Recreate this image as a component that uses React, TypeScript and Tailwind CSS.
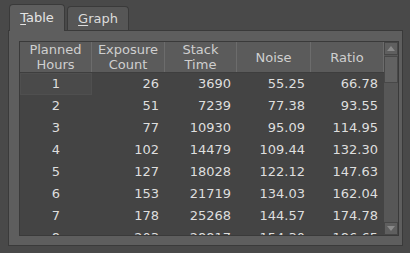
import React from "react";

const rows = [
  ["1", "26", "3690", "55.25", "66.78"],
  ["2", "51", "7239", "77.38", "93.55"],
  ["3", "77", "10930", "95.09", "114.95"],
  ["4", "102", "14479", "109.44", "132.30"],
  ["5", "127", "18028", "122.12", "147.63"],
  ["6", "153", "21719", "134.03", "162.04"],
  ["7", "178", "25268", "144.57", "174.78"],
  ["8", "203", "28817", "154.30", "186.65"],
];

const headers = [
  ["Planned", "Hours"],
  ["Exposure", "Count"],
  ["Stack", "Time"],
  ["Noise"],
  ["Ratio"],
];

const cols = "grid grid-cols-[72px_73px_72px_74px_73px]";

export default function App() {
  return (
    <div
      className="w-[410px] h-[253px] bg-[#494949] pt-[4px] pl-[8px] pr-[7px] overflow-hidden text-[13px] text-[#dedede]"
      style={{ fontFamily: '"DejaVu Sans", sans-serif' }}
    >
      {/* Tabs */}
      <div className="flex items-end h-[27px] pl-[1px] gap-[2px] relative z-10">
        <div className="w-[56px] h-[27px] bg-[#5e5e5e] border border-b-0 border-[#3a3a3a] rounded-t-[4px] flex items-center justify-center leading-none pb-[2px] text-[#e4e4e4]">
          <span><span className="underline underline-offset-2">T</span>able</span>
        </div>
        <div className="w-[62px] h-[24px] bg-[#565656] border border-b-0 border-[#3a3a3a] rounded-t-[4px] flex items-center justify-center leading-none text-[#dcdcdc] mb-[1px]">
          <span><span className="underline underline-offset-2">G</span>raph</span>
        </div>
      </div>

      {/* Panel */}
      <div className="-mt-[1px] h-[216px] bg-[#5e5e5e] border border-[#3a3a3a] pl-[10px] pr-[3px] pt-[10px] pb-[9px]">
        <div className="h-[195px] border border-[#3a3a3a] bg-[#444444] flex">
          <div className="flex-1 flex flex-col overflow-hidden">
            {/* Header */}
            <div className={`${cols} h-[31px] bg-[#5b5b5b] border-b border-[#3e3e3e] shrink-0`}>
              {headers.map((h, i) => (
                <div
                  key={i}
                  className="border-r border-[#6c6c6c] flex flex-col items-center justify-center leading-[15px] text-[#cfcfcf]"
                >
                  {h.map((t) => (
                    <span key={t}>{t}</span>
                  ))}
                </div>
              ))}
            </div>
            {/* Body */}
            <div className="flex-1 overflow-hidden">
              {rows.map((r, ri) => (
                <div key={ri} className={`${cols} h-[22px]`}>
                  {r.map((v, ci) => (
                    <div
                      key={ci}
                      className={
                        ci === 0
                          ? `flex items-center justify-center ${ri === 0 ? "bg-[#4a4a4a] border border-[#4f4f4f]" : ""}`
                          : "flex items-center justify-end pr-[6px]"
                      }
                    >
                      {v}
                    </div>
                  ))}
                </div>
              ))}
            </div>
          </div>

          {/* Scrollbar */}
          <div className="w-[14px] bg-[#575757] flex flex-col items-stretch">
            <div className="h-[13px] mt-[0px] bg-[#5f5f5f] border border-[#464646] flex items-center justify-center">
              <svg width="8" height="5" viewBox="0 0 8 5">
                <polygon points="4,0 8,5 0,5" fill="#8a8a8a" />
              </svg>
            </div>
            <div className="h-[27px] mt-[1px] bg-[#626262] border border-[#484848]" />
            <div className="flex-1" />
            <div className="h-[13px] mb-[0px] bg-[#5f5f5f] border border-[#464646] flex items-center justify-center">
              <svg width="8" height="5" viewBox="0 0 8 5">
                <polygon points="0,0 8,0 4,5" fill="#8a8a8a" />
              </svg>
            </div>
          </div>
        </div>
      </div>
    </div>
  );
}
